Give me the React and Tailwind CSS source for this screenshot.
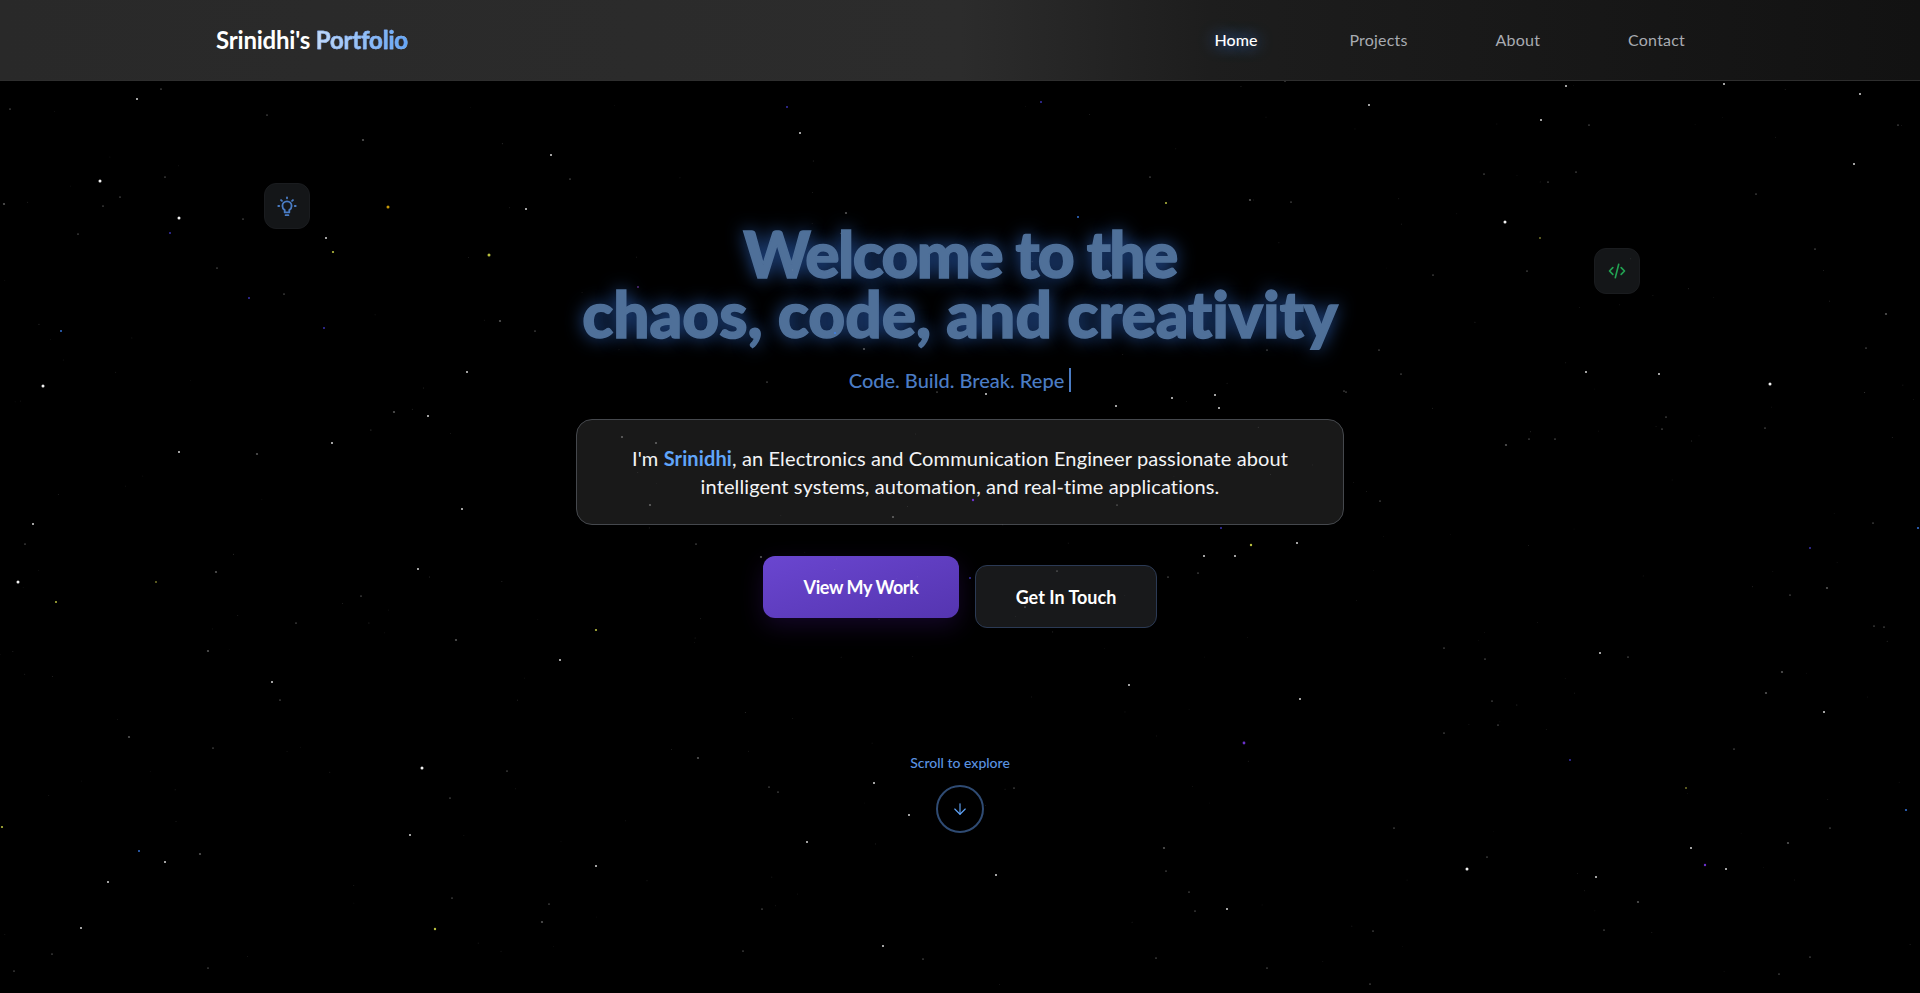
import { ArrowDown } from "lucide-react";

const FONT = "font-['Lato','Noto_Sans',sans-serif]";

const WHITE = "#ffffff";
const GREY = "#d8d8d8";
const YELLOW = "#d9e04a";
const INDIGO = "#4338ca";
const PURPLE = "#7c3aed";
const BLUE = "#3b82f6";

// stars that can be told apart in the picture: [x, y]
const large = [[43, 386], [18, 582], [100, 181], [179, 218], [422, 768], [1467, 869], [1770, 384], [1505, 222]];
const medium = [
  [137, 99], [551, 155], [526, 209], [326, 238], [467, 372], [428, 416], [332, 443], [179, 452], [462, 509], [33, 524],
  [418, 569], [560, 660], [272, 682], [165, 862], [108, 882], [410, 835], [596, 866], [81, 928], [1129, 685], [874, 783],
  [909, 815], [807, 842], [996, 875], [1227, 909], [883, 946], [1300, 699], [1824, 712], [1691, 848], [1726, 869], [1596, 877],
  [1586, 372], [1659, 374], [1566, 86], [1724, 84], [1860, 94], [1369, 105], [1541, 120], [1854, 164], [986, 394], [1172, 398],
  [1215, 395], [1116, 406], [1219, 408], [1204, 556], [1235, 556], [1297, 543], [1600, 653], [800, 133],
];
const dim = [
  [363, 140], [4, 204], [394, 412], [257, 454], [216, 572], [500, 321], [208, 651], [129, 737], [200, 854], [542, 922],
  [456, 640], [698, 758], [1164, 848], [1782, 672], [1766, 693], [1788, 843], [1638, 902], [1506, 445], [1827, 588], [1886, 314],
  [1250, 200], [622, 437], [656, 443], [650, 505], [893, 517], [846, 213], [761, 557], [864, 349],
];
const small = [
  [217, 268], [284, 294], [535, 331], [25, 544], [361, 596], [507, 771], [452, 898], [549, 904], [280, 700], [213, 748],
  [450, 798], [14, 971], [52, 954], [208, 968], [296, 623], [1156, 958], [1267, 968], [778, 792], [769, 787], [1014, 788],
  [1189, 892], [1195, 911], [1166, 871], [762, 909], [743, 951], [923, 959], [1444, 648], [1485, 659], [1628, 657], [1492, 701],
  [1498, 725], [1444, 733], [1734, 749], [1830, 828], [1487, 857], [1394, 828], [1604, 930], [1810, 957], [1779, 974], [1373, 931],
  [1370, 984], [1874, 626], [1884, 627], [1529, 439], [1555, 439], [1666, 417], [1662, 429], [1765, 428], [1344, 391], [1401, 374],
  [1866, 348], [1379, 350], [1380, 501], [1873, 523], [1790, 595], [161, 89], [10, 109], [267, 115], [570, 179], [165, 177],
  [120, 197], [103, 206], [78, 234], [243, 219], [1291, 202], [1548, 182], [1576, 172], [1484, 174], [1589, 125], [1898, 125],
  [1756, 194], [1815, 249], [1433, 275], [1527, 271], [1285, 81], [1267, 350], [1346, 392], [767, 382], [937, 392], [1117, 505],
  [1198, 573], [1168, 577], [1057, 571], [696, 544], [1025, 607], [1150, 177],
];
const tinted = [
  [333, 252, YELLOW, 1.1], [489, 255, YELLOW, 1.5], [388, 207, "#eab308", 1.5], [596, 630, YELLOW, 1.1], [56, 602, YELLOW, 1],
  [156, 582, "#8a8a30", 1], [435, 929, YELLOW, 1.2], [2, 827, YELLOW, 1.1], [1166, 203, YELLOW, 1], [1540, 238, "#8a8a30", 1],
  [1686, 788, "#8a8a30", 1], [1251, 545, YELLOW, 1.2], [61, 331, BLUE, 1], [139, 851, BLUE, 1], [1906, 810, BLUE, 1.1],
  [1918, 528, BLUE, 1.1], [835, 333, BLUE, 1], [1078, 217, BLUE, 1], [249, 298, INDIGO, 1], [324, 328, INDIGO, 1],
  [170, 233, INDIGO, 1], [787, 107, INDIGO, 1], [1041, 102, INDIGO, 1], [1570, 760, INDIGO, 1], [1221, 528, INDIGO, 1],
  [970, 578, INDIGO, 1], [1810, 548, INDIGO, 1], [1244, 743, PURPLE, 1.4], [1705, 865, PURPLE, 1.2], [973, 500, PURPLE, 1.2],
  [638, 287, "#a855f7", 0.8],
];

// the faint dust behind them, seeded so it stays the same on every render
const makeDust = (count) => {
  let seed = 20;
  const rand = () => {
    seed = (seed * 16807) % 2147483647;
    return seed / 2147483647;
  };
  return Array.from({ length: count }, () => [rand() * 1920, 84 + rand() * 905, 0.25 + rand() * 0.25, 0.15 + rand() * 0.25]);
};

const dust = makeDust(230);

const StarField = () => (
  <svg className="absolute inset-0 z-10 w-full h-full pointer-events-none" viewBox="0 0 1920 993">
    {dust.map(([cx, cy, r, opacity], i) => (
      <circle key={`d${i}`} cx={cx} cy={cy} r={r} fill={GREY} opacity={opacity} />
    ))}
    {small.map(([cx, cy], i) => (
      <circle key={`s${i}`} cx={cx} cy={cy} r={0.55} fill={GREY} opacity={0.8} />
    ))}
    {dim.map(([cx, cy], i) => (
      <circle key={`m${i}`} cx={cx} cy={cy} r={1.1} fill={GREY} opacity={0.4} />
    ))}
    {medium.map(([cx, cy], i) => (
      <circle key={`n${i}`} cx={cx} cy={cy} r={1} fill={WHITE} opacity={0.85} />
    ))}
    {large.map(([cx, cy], i) => (
      <circle key={`l${i}`} cx={cx} cy={cy} r={1.5} fill={WHITE} opacity={0.95} />
    ))}
    {tinted.map(([cx, cy, fill, r], i) => (
      <circle key={`t${i}`} cx={cx} cy={cy} r={r} fill={fill} opacity={0.85} />
    ))}
  </svg>
);

const NavBar = () => (
  <nav className="relative z-20 h-[81px] border-b border-[#2e2e2e] bg-[linear-gradient(90deg,#292929_0%,#2c2c2c_50%,#1d1d1d_63%,#121212_100%)]">
    <div className="flex items-center justify-between h-full pl-[216px] pr-[235px]">
      <div className="text-2xl font-bold leading-none text-white tracking-[-0.2px]">
        Srinidhi's{" "}
        <span className="bg-gradient-to-r from-[#c4d9f7] to-[#60a5fa] bg-clip-text text-transparent [-webkit-text-stroke:0.4px_#8fbaf5]">Portfolio</span>
      </div>
      <div className="flex items-center gap-[88px] text-base tracking-[0.2px]">
        <a className="mr-1 tracking-normal text-white font-medium [text-shadow:0_0_16px_#3b82f6]">Home</a>
        <a className="text-[#a8abb1]">Projects</a>
        <a className="text-[#a8abb1]">About</a>
        <a className="text-[#a8abb1]">Contact</a>
      </div>
    </div>
  </nav>
);

const FloatIcon = ({ className, children }) => (
  <div className={`absolute flex items-center justify-center w-[46px] h-[46px] rounded-xl border border-[#1a1c1f] bg-[#141618] ${className}`}>
    {children}
  </div>
);

const Hero = () => (
  <main className="relative flex flex-col items-center pt-[143px]">
    <h1 className="text-[64px] leading-[60px] font-black text-center text-[#4f7099] [font-variant-ligatures:none] [-webkit-text-stroke:1.5px_#4f7099] [text-shadow:0_0_18px_rgba(59,130,246,0.7)]">
      <span className="tracking-[-1.6px]">Welcome to the</span>
      <br />
      chaos, code, and creativity
    </h1>
    <p className="mt-5 h-8 text-xl leading-8 font-medium text-[#4b7cc4] flex items-center">
      Code. Build. Break. Repe
      <span className="ml-[5px] w-[2px] h-6 bg-[#4b7cc4]" />
    </p>
    <div className="mt-[23px] w-[768px] h-[106px] flex items-center justify-center rounded-2xl border border-[#45484d] bg-[#191919]">
      <p className="text-xl leading-7 text-center text-[#f3f4f6] tracking-[0.12px] [font-variant-ligatures:none]">
        I'm <span className="font-bold text-[#60a5fa]">Srinidhi</span>, an Electronics and Communication Engineer passionate about
        <br />
        intelligent systems, automation, and real-time applications.
      </p>
    </div>
    <div className="flex items-start gap-4 mt-[31px]">
      <button className="w-[196px] h-[62px] rounded-xl bg-gradient-to-br from-[#6a46d0] to-[#5535b0] text-lg font-bold text-white tracking-[-0.4px] shadow-[0_8px_24px_rgba(91,33,182,0.22)]">
        View My Work
      </button>
      <button className="mt-[9px] w-[182px] h-[63px] rounded-xl border border-[#2b3a55] bg-[#18191b] text-lg font-bold text-white">
        Get In Touch
      </button>
    </div>
    <div className="flex flex-col items-center mt-[125px]">
      <span className="text-sm font-medium leading-5 text-[#5b93e0]">Scroll to explore</span>
      <div className="flex items-center justify-center mt-[12px] w-12 h-12 rounded-full border-2 border-[#2f4b73]">
        <ArrowDown className="w-[18px] h-[18px] text-[#60a5fa]" strokeWidth={1.5} />
      </div>
    </div>
  </main>
);

export default function App() {
  return (
    <div className={`relative h-[993px] overflow-hidden bg-black ${FONT}`}>
      <NavBar />
      <FloatIcon className="left-[264px] top-[183px]">
        <svg className="w-[22px] h-[22px]" viewBox="0 0 24 24" fill="none" stroke="#4a7cc4" strokeWidth="2" strokeLinecap="round" strokeLinejoin="round">
          <path d="M9.5 16.5C8 15.5 7 14 7 12a5 5 0 0 1 10 0c0 2-1 3.5-2.5 4.5V19h-5z" />
          <path d="M10.5 22h3" />
          <path d="M12 2.5v1" />
          <path d="m5.5 5.5 1 1" />
          <path d="m18.5 5.5-1 1" />
          <path d="M2.5 12h1" />
          <path d="M20.5 12h1" />
        </svg>
      </FloatIcon>
      <FloatIcon className="left-[1594px] top-[248px]">
        <svg className="w-5 h-5" viewBox="0 0 24 24" fill="none" stroke="#22a352" strokeWidth="2" strokeLinecap="round" strokeLinejoin="round">
          <path d="m7 8-4 4 4 4" />
          <path d="m17 8 4 4-4 4" />
          <path d="m14 4-4 16" />
        </svg>
      </FloatIcon>
      <Hero />
      <StarField />
    </div>
  );
}
